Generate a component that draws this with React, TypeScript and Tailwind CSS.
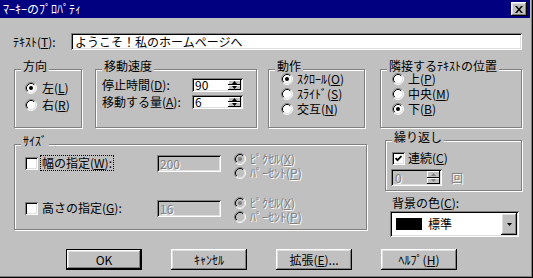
import React from 'react'

const raised =
  'bg-[#c0c0c0] shadow-[inset_-1px_-1px_#000,inset_1px_1px_#fff,inset_-2px_-2px_#808080,inset_2px_2px_#dfdfdf]'
const sunken =
  'shadow-[inset_1px_1px_#808080,inset_-1px_-1px_#fff,inset_2px_2px_#000,inset_-2px_-2px_#dfdfdf]'
const dim = 'text-[#808080] [text-shadow:1px_1px_0_#fff]'

function Key({ k }: { k: string }) {
  return <span className="underline underline-offset-[1px]">{k}</span>
}

function Radio({ on, disabled }: { on?: boolean; disabled?: boolean }) {
  return (
    <svg width="12" height="12" viewBox="0 0 12 12" className="shrink-0">
      <circle cx="6" cy="6" r="5" fill={disabled ? '#c0c0c0' : '#fff'} />
      <path d="M2.11 9.89 A5.5 5.5 0 0 1 9.89 2.11" stroke="#808080" fill="none" />
      <path d="M9.89 2.11 A5.5 5.5 0 0 1 2.11 9.89" stroke="#fff" fill="none" />
      <path d="M2.82 9.18 A4.5 4.5 0 0 1 9.18 2.82" stroke="#000" fill="none" />
      <path d="M9.18 2.82 A4.5 4.5 0 0 1 2.82 9.18" stroke="#dfdfdf" fill="none" />
      {on && <circle cx="6" cy="6" r="2" fill={disabled ? '#808080' : '#000'} />}
    </svg>
  )
}

function Check({ on }: { on?: boolean }) {
  return (
    <div className={`w-[13px] h-[13px] bg-white shrink-0 flex items-center justify-center ${sunken}`}>
      {on && (
        <svg width="7" height="7" viewBox="0 0 7 7">
          <polyline points="0.5,3 2.5,5.2 6.5,1" stroke="#000" strokeWidth="1.8" fill="none" />
        </svg>
      )}
    </div>
  )
}

function Tri({ up, color = '#000' }: { up?: boolean; color?: string }) {
  return (
    <svg width="5" height="3" viewBox="0 0 5 3">
      <path d={up ? 'M2.5 0L5 3H0z' : 'M0 0h5L2.5 3z'} fill={color} />
    </svg>
  )
}

function SpinBtns({ disabled }: { disabled?: boolean }) {
  const c = disabled ? '#808080' : '#000'
  return (
    <div className="w-[13px] flex flex-col">
      <div className="flex-1 flex items-center justify-center bg-[#c0c0c0] shadow-[inset_-1px_-1px_#000,inset_1px_1px_#fff]">
        <Tri up color={c} />
      </div>
      <div className="flex-1 flex items-center justify-center bg-[#c0c0c0] shadow-[inset_-1px_-1px_#000,inset_1px_1px_#fff]">
        <Tri color={c} />
      </div>
    </div>
  )
}

function Group({ title, className, children }: { title: string; className: string; children?: React.ReactNode }) {
  return (
    <div className={`relative border border-[#808080] shadow-[inset_1px_1px_#fff,1px_1px_#fff] ${className}`}>
      <span className="absolute -top-[10px] left-[6px] bg-[#c0c0c0] px-[2px] leading-[12px]">{title}</span>
      {children}
    </div>
  )
}

function Btn({ children, def }: { children: React.ReactNode; def?: boolean }) {
  return (
    <div
      className={`w-[76px] h-[21px] flex items-center justify-center bg-[#c0c0c0] ${
        def
          ? 'shadow-[inset_0_0_0_1px_#000,inset_-2px_-2px_#000,inset_2px_2px_#fff,inset_-3px_-3px_#808080,inset_3px_3px_#dfdfdf]'
          : raised
      }`}
    >
      {children}
    </div>
  )
}

function Opt({ on, children }: { on?: boolean; children: React.ReactNode }) {
  return (
    <div className="h-[15px] flex items-center gap-[4px]">
      <Radio on={on} />
      <span className="leading-[12px]">{children}</span>
    </div>
  )
}

export default function App() {
  return (
    <div className="w-[533px] h-[278px] bg-[#c0c0c0] overflow-hidden text-[12px] leading-[14px] text-black [font-family:'Noto_Sans_CJK_JP','Noto_Sans',sans-serif] shadow-[inset_-1px_-1px_#000,inset_-2px_-2px_#808080]">
      {/* title bar */}
      <div className="w-[530px] h-[18px] bg-[#000080] flex items-center pl-[3px] pr-[3px]">
        <span className="text-white">ﾏｰｷｰのﾌﾟﾛﾊﾟﾃｨ</span>
        <div className={`ml-auto w-[16px] h-[14px] flex items-center justify-center ${raised}`}>
          <svg width="8" height="7" viewBox="0 0 8 7">
            <path d="M0 0h2l2 2.5 2-2.5h2l-3 3.5 3 3.5h-2l-2-2.5-2 2.5h-2l3-3.5z" fill="#000" />
          </svg>
        </div>
      </div>

      {/* text row */}
      <div className="mt-[15px] flex items-center">
        <span className="w-[71px] pl-[13px]">
          ﾃｷｽﾄ(<Key k="T" />):
        </span>
        <div className={`w-[451px] h-[17px] bg-white flex items-center pl-[4px] ${sunken}`}>
          ようこそ！私のホームページへ
        </div>
      </div>

      {/* groups row */}
      <div className="mt-[19px] flex pl-[14px]">
        <Group title="方向" className="w-[68px] h-[59px]">
          <div className="pt-[9px] pl-[10px] flex flex-col">
            <div className="h-[17px] flex items-center gap-[5px]">
              <Radio on />
              <span>
                左(<Key k="L" />)
              </span>
            </div>
            <div className="h-[17px] flex items-center gap-[5px]">
              <Radio />
              <span>
                右(<Key k="R" />)
              </span>
            </div>
          </div>
        </Group>

        <Group title="移動速度" className="ml-[13px] w-[162px] h-[59px]">
          <div className="pt-[8px] pl-[6px] flex flex-col gap-[3px]">
            <div className="h-[14px] flex items-center">
              <span className="w-[90px]">
                停止時間(<Key k="D" />):
              </span>
              <div className={`w-[51px] h-[14px] bg-white flex p-[2px] ${sunken}`}>
                <span className="flex-1 pl-[1px] leading-[10px]">90</span>
                <SpinBtns />
              </div>
            </div>
            <div className="h-[14px] flex items-center">
              <span className="w-[90px]">
                移動する量(<Key k="A" />):
              </span>
              <div className={`w-[51px] h-[14px] bg-white flex p-[2px] ${sunken}`}>
                <span className="flex-1 pl-[1px] leading-[10px]">6</span>
                <SpinBtns />
              </div>
            </div>
          </div>
        </Group>

        <Group title="動作" className="ml-[11px] w-[97px] h-[59px]">
          <div className="pt-[1px] pl-[12px] flex flex-col">
            <Opt on>
              ｽｸﾛｰﾙ(<Key k="O" />)
            </Opt>
            <Opt>
              ｽﾗｲﾄﾞ(<Key k="S" />)
            </Opt>
            <Opt>
              交互(<Key k="N" />)
            </Opt>
          </div>
        </Group>

        <Group title="隣接するﾃｷｽﾄの位置" className="ml-[15px] w-[142px] h-[59px]">
          <div className="pt-[1px] pl-[11px] flex flex-col">
            <Opt>
              上(<Key k="P" />)
            </Opt>
            <Opt>
              中央(<Key k="M" />)
            </Opt>
            <Opt on>
              下(<Key k="B" />)
            </Opt>
          </div>
        </Group>
      </div>

      {/* size / repeat row */}
      <div className="mt-[12px] flex items-start">
        <Group title="ｻｲｽﾞ" className="ml-[14px] mt-[4px] w-[353px] h-[86px]">
          <div className="pt-[7px] pl-[10px] flex flex-col">
            <div className="flex items-start h-[28px]">
              <div className="w-[132px] flex items-center mt-[3px]">
                <Check />
                <span className="ml-[2px] px-[1px] border border-dotted border-black leading-[14px]">
                  幅の指定(<Key k="W" />):
                </span>
              </div>
              <div className={`mt-[3px] w-[64px] h-[17px] bg-[#c0c0c0] flex items-center pl-[3px] ${sunken}`}>
                <span className={dim}>200</span>
              </div>
              <div className="ml-[13px] flex flex-col">
                <div className="h-[14px] flex items-center gap-[4px]">
                  <Radio on disabled />
                  <span className={dim}>
                    ﾋﾟｸｾﾙ(<Key k="X" />)
                  </span>
                </div>
                <div className="h-[14px] flex items-center gap-[4px]">
                  <Radio disabled />
                  <span className={dim}>
                    ﾊﾟｰｾﾝﾄ(<Key k="P" />)
                  </span>
                </div>
              </div>
            </div>
            <div className="mt-[16px] flex items-start h-[28px]">
              <div className="w-[132px] flex items-center mt-[5px]">
                <Check />
                <span className="ml-[3px] px-[1px]">
                  高さの指定(<Key k="G" />):
                </span>
              </div>
              <div className={`mt-[4px] w-[64px] h-[17px] bg-[#c0c0c0] flex items-center pl-[3px] ${sunken}`}>
                <span className={dim}>16</span>
              </div>
              <div className="ml-[13px] flex flex-col">
                <div className="h-[14px] flex items-center gap-[4px]">
                  <Radio on disabled />
                  <span className={dim}>
                    ﾋﾟｸｾﾙ(<Key k="X" />)
                  </span>
                </div>
                <div className="h-[14px] flex items-center gap-[4px]">
                  <Radio disabled />
                  <span className={dim}>
                    ﾊﾟｰｾﾝﾄ(<Key k="P" />)
                  </span>
                </div>
              </div>
            </div>
          </div>
        </Group>

        <div className="ml-[18px] flex flex-col">
          <Group title="繰り返し" className="w-[137px] h-[51px]">
            <div className="pt-[10px] pl-[6px] flex flex-col">
              <div className="flex items-center gap-[3px]">
                <Check on />
                <span>
                  連続(<Key k="C" />)
                </span>
              </div>
              <div className="mt-[4px] flex items-center -ml-[1px]">
                <div className={`w-[51px] h-[17px] bg-[#c0c0c0] flex p-[2px] ${sunken}`}>
                  <span className={`flex-1 pl-[2px] leading-[13px] ${dim}`}>0</span>
                  <SpinBtns disabled />
                </div>
                <span className={`ml-[9px] ${dim}`}>回</span>
              </div>
            </div>
          </Group>
          <span className="mt-[5px] ml-[7px] h-[14px]">
            背景の色(<Key k="C" />):
          </span>
          <div className={`mt-[1px] ml-[5px] w-[129px] h-[26px] bg-white flex items-center p-[2px] ${sunken}`}>
            <div className="ml-[4px] w-[26px] h-[12px] bg-black" />
            <span className="ml-[6px]">標準</span>
            <div className={`ml-auto w-[16px] h-full flex items-center justify-center ${raised}`}>
              <Tri />
            </div>
          </div>
        </div>
      </div>

      {/* buttons */}
      <div className="mt-[12px] flex pl-[66px] gap-[29px]">
        <Btn def>OK</Btn>
        <Btn>ｷｬﾝｾﾙ</Btn>
        <Btn>
          拡張(<Key k="E" />)...
        </Btn>
        <Btn>
          ﾍﾙﾌﾟ(<Key k="H" />)
        </Btn>
      </div>
    </div>
  )
}
